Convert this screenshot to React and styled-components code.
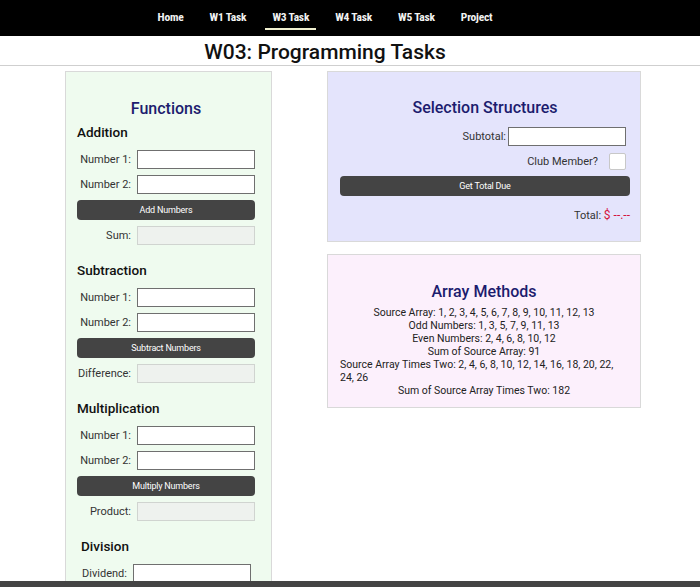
import React from "react";
import styled, { createGlobalStyle } from "styled-components";

const GlobalStyle = createGlobalStyle`
  body {
    margin: 0;
    background: #ffffff;
    font-family: Roboto, "Liberation Sans", sans-serif;
    color: #222;
  }
`;

const navLinks = ["Home", "W1 Task", "W3 Task", "W4 Task", "W5 Task", "Project"];

const sections = [
  { title: "Addition", button: "Add Numbers", result: "Sum:", rows: ["Number 1:", "Number 2:"] },
  { title: "Subtraction", button: "Subtract Numbers", result: "Difference:", rows: ["Number 1:", "Number 2:"] },
  { title: "Multiplication", button: "Multiply Numbers", result: "Product:", rows: ["Number 1:", "Number 2:"] },
];

const arrayLines = [
  "Source Array: 1, 2, 3, 4, 5, 6, 7, 8, 9, 10, 11, 12, 13",
  "Odd Numbers: 1, 3, 5, 7, 9, 11, 13",
  "Even Numbers: 2, 4, 6, 8, 10, 12",
  "Sum of Source Array: 91",
  "Source Array Times Two: 2, 4, 6, 8, 10, 12, 14, 16, 18, 20, 22, 24, 26",
  "Sum of Source Array Times Two: 182",
];

function FuncSection({ title, button, result, rows }) {
  return (
    <Section>
      <SectionTitle>{title}</SectionTitle>
      <FormGrid>
        {rows.map((r) => (
          <React.Fragment key={r}>
            <Label>{r}</Label>
            <TextInput type="text" />
          </React.Fragment>
        ))}
        <DarkButton $full>{button}</DarkButton>
        <Label>{result}</Label>
        <TextInput type="text" disabled />
      </FormGrid>
    </Section>
  );
}

function App() {
  return (
    <>
      <GlobalStyle />
      <Nav>
        <NavList>
          {navLinks.map((l) => (
            <NavLink key={l} $active={l === "W3 Task"}>{l}</NavLink>
          ))}
        </NavList>
      </Nav>
      <PageTitle>W03: Programming Tasks</PageTitle>
      <Main>
        <Card $bg="#effbef">
          <CardTitle $top="1px">Functions</CardTitle>
          {sections.map((s) => (
            <FuncSection key={s.title} {...s} />
          ))}
          <Section>
            <SectionTitle $indent>Division</SectionTitle>
            <FormGrid $shift>
              <Label>Dividend:</Label>
              <TextInput type="text" />
            </FormGrid>
          </Section>
        </Card>
        <RightColumn>
          <Card $bg="#e4e4fc" $pad="26px 10px 18px 12px">
            <CardTitle $gap="9px">Selection Structures</CardTitle>
            <SelectRow>
              <Label>Subtotal:</Label>
              <TextInput type="text" />
            </SelectRow>
            <SelectRow $check>
              <Label>Club Member?</Label>
              <CheckBox type="checkbox" />
            </SelectRow>
            <DarkButton>Get Total Due</DarkButton>
            <Total>
              Total: <Money>$ --.--</Money>
            </Total>
          </Card>
          <Card $bg="#fcf0fc" $pad="27px 12px 10px 12px">
            <CardTitle>Array Methods</CardTitle>
            <ArrayList>
              {arrayLines.map((l) => (
                <ArrayLine key={l}>{l}</ArrayLine>
              ))}
            </ArrayList>
          </Card>
        </RightColumn>
      </Main>
      <Footer />
    </>
  );
}

export default App;

const Nav = styled.nav`
  background: #000;
  height: 36px;
  padding-right: 50px;
`;

const NavList = styled.div`
  display: flex;
  justify-content: center;
  align-items: flex-start;
  height: 100%;
  gap: 12px;
`;

const NavLink = styled.a`
  display: flex;
  align-items: center;
  box-sizing: border-box;
  height: 30px;
  padding: 6px 7px 0;
  color: #f2f2f2;
  font-family: "Liberation Sans Narrow", "Roboto Condensed", "Liberation Sans", sans-serif;
  font-stretch: condensed;
  font-weight: bold;
  font-size: 11.5px;
  letter-spacing: -0.2px;
  border-bottom: 2px solid ${(p) => (p.$active ? "#f0f0d0" : "transparent")};
`;

const PageTitle = styled.h1`
  margin: 0;
  height: 29px;
  line-height: 32px;
  padding-right: 50px;
  text-align: center;
  font-size: 21px;
  font-weight: 500;
  color: #111;
  border-bottom: 1px solid #cfcfcf;
`;

const Main = styled.main`
  display: grid;
  grid-template-columns: 207px 314px;
  column-gap: 55px;
  align-items: start;
  padding: 5px 0 0 65px;
`;

const RightColumn = styled.div`
  display: flex;
  flex-direction: column;
  gap: 12px;
`;

const Card = styled.section`
  background: ${(p) => p.$bg};
  border: 1px solid #d9d9d9;
  padding: ${(p) => p.$pad || "26px 16px 40px 11px"};
  box-sizing: border-box;
`;

const CardTitle = styled.h2`
  margin: ${(p) => p.$top || "0"} 0 ${(p) => p.$gap || "4px"};
  text-align: center;
  font-size: 16px;
  line-height: 20px;
  font-weight: 500;
  color: #1c1c6e;
`;

const Section = styled.div`
  margin-bottom: 16px;
`;

const SectionTitle = styled.h3`
  margin: 0 0 9px;
  padding-left: ${(p) => (p.$indent ? "4px" : "0")};
  font-size: 13.5px;
  line-height: 18px;
  font-weight: 500;
  color: #111;
`;

const FormGrid = styled.div`
  display: grid;
  grid-template-columns: 1fr 118px;
  column-gap: 6px;
  row-gap: 6px;
  align-items: center;
  margin-right: ${(p) => (p.$shift ? "4px" : "0")};
`;

const Label = styled.label`
  text-align: right;
  font-size: 11px;
  color: #333;
`;

const TextInput = styled.input`
  box-sizing: border-box;
  width: 118px;
  height: 19px;
  margin: 0;
  padding: 0 3px;
  border: 1px solid ${(p) => (p.disabled ? "#d0d4d0" : "#6f6f6f")};
  border-radius: 0;
  background: ${(p) => (p.disabled ? "#eef2ee" : "#fff")};
`;

const DarkButton = styled.button`
  grid-column: ${(p) => (p.$full ? "1 / -1" : "auto")};
  width: 100%;
  height: 20px;
  margin: 0;
  padding: 0;
  border: none;
  border-radius: 4px;
  background: #444444;
  color: #fff;
  font-family: Roboto, "Liberation Sans", sans-serif;
  font-size: 9px;
  letter-spacing: -0.2px;
`;

const SelectRow = styled.div`
  display: flex;
  justify-content: flex-end;
  align-items: center;
  gap: ${(p) => (p.$check ? "11px" : "2px")};
  padding-right: 4px;
  margin-bottom: ${(p) => (p.$check ? "4px" : "7px")};
`;

const CheckBox = styled.input`
  appearance: none;
  width: 17px;
  height: 17px;
  margin: 0;
  background: #fff;
  border: 1px solid #c8c8c8;
  border-radius: 2px;
`;

const Total = styled.div`
  margin-top: 12px;
  text-align: right;
  font-size: 11px;
  line-height: 14px;
  color: #333;
`;

const Money = styled.span`
  color: #d4143c;
  font-size: 12px;
`;

const ArrayList = styled.div`
  display: flex;
  flex-direction: column;
  align-items: center;
  margin-top: 4px;
  font-size: 10.5px;
  line-height: 13px;
  color: #222;
`;

const ArrayLine = styled.div`
  text-align: left;
`;

const Footer = styled.footer`
  position: fixed;
  left: 0;
  right: 0;
  bottom: 0;
  height: 6px;
  background: #444;
`;
